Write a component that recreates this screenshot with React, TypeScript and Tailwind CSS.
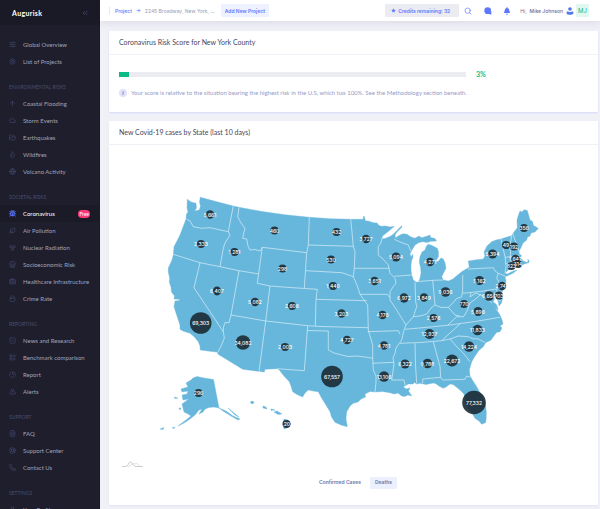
import { useState } from "react";
import {
  ArrowRight,
  ArrowUp,
  BriefcaseMedical,
  Bug,
  ChartPie,
  ChevronsLeft,
  Cloud,
  FileText,
  Flame,
  FolderOpen,
  Globe,
  LayoutList,
  Leaf,
  LifeBuoy,
  Lock,
  Phone,
  Radiation,
  Search,
  Settings,
  SlidersHorizontal,
  SquareCheck,
  Store,
  TriangleAlert,
  User,
} from "lucide-react";

const menu = [
  {
    title: "",
    items: [
      { label: "Global Overview", icon: SlidersHorizontal },
      { label: "List of Projects", icon: Settings },
    ],
  },
  {
    title: "Environmental risks",
    items: [
      { label: "Coastal Flooding", icon: ArrowUp },
      { label: "Storm Events", icon: Cloud },
      { label: "Earthquakes", icon: FolderOpen },
      { label: "Wildfires", icon: Flame },
      { label: "Volcano Activity", icon: Globe },
    ],
  },
  {
    title: "Societal risks",
    items: [
      { label: "Coronavirus", icon: Bug, active: true, badge: "Free" },
      { label: "Air Pollution", icon: Leaf },
      { label: "Nuclear Radiation", icon: Radiation },
      { label: "Socioeconomic Risk", icon: Store },
      { label: "Healthcare Infrastructure", icon: BriefcaseMedical },
      { label: "Crime Rate", icon: Lock },
    ],
  },
  {
    title: "Reporting",
    items: [
      { label: "News and Research", icon: SquareCheck },
      { label: "Benchmark comparison", icon: LayoutList },
      { label: "Report", icon: ChartPie },
      { label: "Alerts", icon: TriangleAlert },
    ],
  },
  {
    title: "Support",
    items: [
      { label: "FAQ", icon: FileText },
      { label: "Support Center", icon: LifeBuoy },
      { label: "Contact Us", icon: Phone },
    ],
  },
  {
    title: "Settings",
    items: [{ label: "Your Profile", icon: User }],
  },
];

// x, y, radius, cases
const bubbles: [number, number, number, string][] = [
  [210, 214.5, 4.5, "5,661"],
  [201, 244, 4.3, "2,333"],
  [234.5, 252, 4.3, "1,281"],
  [274.5, 230.5, 4.3, "460"],
  [282.5, 268.5, 4.3, "298"],
  [217, 291, 4.6, "6,407"],
  [255, 302, 4.5, "5,082"],
  [292, 306, 4.3, "2,606"],
  [336.5, 232, 4.3, "432"],
  [331, 259.5, 4.3, "530"],
  [333, 286, 4.3, "1,440"],
  [366, 239, 4.5, "3,727"],
  [374.5, 281, 4.5, "3,651"],
  [396, 257, 4.7, "5,094"],
  [430, 262, 4.5, "4,271"],
  [404, 298, 4.9, "6,972"],
  [424, 297.5, 4.5, "3,849"],
  [445.5, 292, 5, "9,036"],
  [341.5, 313.5, 4.4, "3,203"],
  [382.5, 315, 4.5, "4,176"],
  [347, 340, 4.5, "4,727"],
  [384, 345.5, 4.5, "4,781"],
  [384, 376.5, 5.4, "13,106"],
  [405, 364, 4.8, "6,322"],
  [427.5, 363.5, 5, "9,788"],
  [452, 360.5, 6.3, "22,672"],
  [469, 346.5, 5.4, "14,224"],
  [477.5, 330, 5.4, "11,833"],
  [429.5, 334, 5.3, "12,937"],
  [433.5, 318, 4.3, "2,576"],
  [464, 304, 4.3, "770"],
  [478, 311.5, 4.7, "5,896"],
  [479.5, 280.5, 4.8, "5,162"],
  [492.5, 254, 4.8, "5,394"],
  [506, 245, 4.3, "49"],
  [514, 246.5, 4.3, "192"],
  [524, 228, 4.3, "356"],
  [515.5, 259, 4.5, "1,642"],
  [518, 264, 4.3, "514"],
  [511.5, 266, 4.3, "823"],
  [502, 286, 4.5, "2,747"],
  [489, 296, 5, "6,650"],
  [499, 295.5, 4.3, "703"],
  [200.7, 323, 11, "69,303"],
  [243, 342.5, 7.5, "34,082"],
  [285, 347, 4.3, "2,003"],
  [332, 376.5, 11, "67,557"],
  [474, 402.5, 12, "77,332"],
  [198.5, 393, 4.3, "296"],
  [286.5, 424, 4.3, "1,207"],
];

const mainland =
  "M200.3 197.3L216 201.5L233.3 206L239 207.3L262 211.5L285 214.8L309.3 217.3L330 218.7L350.7 219.3L363.3 219.3V216.3L364.6 216.8L365.3 220.7L369 221.2L373.3 222.7L377 223L379 225.5L381.7 226.3L386 226L390 227L394.3 226.3L390 230L387.3 232.3L382.5 236L381.7 239L385 238.6L390 236.5L393 234.5L396 231.5L401.7 225.7L402 227L397 232L395 235L395.5 238L399 235.6L403 233.8L407 234.3L411 237L415 238.3L419 236L421.7 237.7L426 236.5L430 235L430.5 237.5L435 238.5L436.5 241L431 241.3L427 242.5L423 241.7L419 242.5L415 245L412.5 249L410 254L411 257L412.7 254L413 257L411.5 261L411 265L411 270L411.7 275L413.3 280L416.7 282.3L419 281L420 278.3L421 273L420.7 268.3L419.3 262L420 256.7L422 252L425 250L426.5 246L428.3 244.3L432 245.5L437.3 248.3L438.5 252L438.3 256.7L435.5 261.7L438 261.5L441 258L443.3 259L445 263L446 268.3L444 272L441.7 276.7L443.3 280L448.3 281L453 279L456.7 275.7L462 271.5L469.3 267.3L468.3 261L475 260L483.3 259L485 256L484 252L487 246L491.7 241.7L496 240L501 239L507 237L511.7 235.7L514 232L517.3 227.7L517 220L518.5 215L520 211L522 212L524 209.7L527.3 210.5L530 220L532.5 221.5L533.5 225.5L538.3 228.3L535 232L531 233L530 236L527.5 237L526.7 240L523 243L520.7 248.3L519 251L519.3 254.3L521.5 255.5L520.5 257.5L523.3 261L527 262.4L528.5 260.5L527.3 259.5L529 260L529 262.5L523 264.5L520.5 266.5L517 267L511.7 269L508 270L505 273.3L507.5 274L512 271.5L517 270L513 273.2L507 276L505 276.5L506 281L505 286.7L502 292L500 291L500.5 295L502.7 298L501.5 303L499 306L498.5 302L496 297L495 292L494 294L494.5 299L493 302L496 304L497.5 307L498 310L495 307L498 312L500 315L502 320L503 324L500 326L502 328L500 331.7L496.5 332.5L493.3 336.7L491 340L485.7 342.7L483 347L479.3 350L475 356L471.7 361.7L469.3 370L470 376L473 381L476.7 386.7L479.5 392L483.3 398.3L485.5 405L486.3 411.7L486.2 418L485.7 422.5L481.7 424.3L479 421L475 418.3L472 413L468.3 408.3L465.5 403L465 398L464 394L460 390L456.7 387.3L453 384.5L450 384L446 387L443.3 388.3L439 386L436 383.8L433.3 383L426 384.5L420 383.3L416.8 384L414.5 382.5L413 384L408.3 384L403.3 386.7L406 389L410 388L408.5 391L411.7 396L408 395L404.5 396.5L401.7 396L398 393L394 394L390 392.7L382.5 391.5L375 392L370 391.5L365 394L365.5 397L361 399L358 402L353.3 403.3L350 406L346.7 411.7L346 419L347.3 426.7L341 425L335 422.3L331.5 417L330 411.7L326 405L321.7 398.3L318.3 391.7L313 391L308.3 390L305 393L302.7 397L297 394.5L292.7 391.7L291 386L289.3 381.7L284 376L279.3 370L277.3 368.7L265 369.3L264.3 372L242.7 369.3L217.7 354L218 352.3L200.3 350L200 346L198.3 341.7L194 336.5L190 333.3L183 331L180 329.3L180 325L177 316L174 306.7L175 301L179.500 300.500L179.500 299.300L174 299L174.5 296L171.5 292L171 287L169.3 282L169.7 278L168.3 272L168.3 268L172 260L173.3 255L174 246.7L177 241L180 235L183 227L186 219.3L186.5 214L188 212L187 208L187.3 199.3L191 202L196 203.3L196.5 208L194.5 211L199.3 210L200.5 206L199.5 202Z";

const borders =
  "M186.7 219.3L190 221L193.3 226.7L201.7 228.3L210 227.7L228.3 231.7" +
  "M233.3 206L228.3 231.7L230 235L225 243L224 246L223 250L220 266.7" +
  "M173.3 254.3L200 262.7L220 266.7L239 270.7L259 274" +
  "M239 207.3L237.7 216.7L241 223L245 228.3L243.5 234L242.7 238.3L246.7 239L248 246L250 250L255 249.5L260 251L262.3 247.3L306.7 252.7" +
  "M262.3 247.3L257.3 283.3L270 286L290 287.5L317.3 289.3L316 299.3L366.7 300.7" +
  "M309.3 217.3L308.3 245L306.7 252.7L304.3 288.3M308.3 245L353.3 246.3M306 270.7L341.7 272.7L347 274.5L353.3 276.7" +
  "M200 262.7L194 287.7L223.3 331.7L224.3 338L222 344L220 348L218 352" +
  "M239 270.7L231 315L229 322.7L225 322.5L223.5 327L223.3 331.7" +
  "M231 315L265.7 321L307.7 325.7L320 326.5L368.3 327.7M270 286L265.7 321L259 371.7" +
  "M316 299.3L315.3 326M307.7 325.7L304.3 370.7L277.3 368.7M307 330.5L328.3 331L328.3 350L334 353L341.7 355L348 356.5L356.7 356L365 357L372.7 358.3L373.3 370L376 376L376 382L375 392" +
  "M350.7 219.3L352 232L353.3 246.3L355 251.7L354.3 268.3L353.3 276.7L357 285L360 294.3L363.3 299L367.7 305L368.3 330L372.7 345V358.3" +
  "M354.3 268.3L389.3 268.3M360 294.3L387.3 294.3L390 297.7M372.7 363.3L394 362.3" +
  "M381.7 239L381 243L378.3 246.7V255L383 259L388.3 265L390 273.3L395 278.3L396 283L393 287L390 291.7V300L396.7 310L401.7 318.3L406 325L404 330L401.7 340L396 348L395 353.3L393 358L394 364L391.7 380L404 380L405 385" +
  "M367.7 331.7L398.3 330.7L400 334.3" +
  "M394.3 276.3L411.7 275M394.3 239.3L400 242L408.3 245L411 251.7M415 281.7L415.7 301.7L416.7 306.7L413.3 316.7" +
  "M416.7 281.7L432.7 280.3L443.3 280M432.7 280.3L435 305" +
  "M406 325L413.3 316.7L420 316L426.7 314L431 308L435 305L441 307.5L448.3 307.3L452 304L456 299L461.7 296.7L462.7 290V275" +
  "M448.3 307.3L455 315L463.3 317L467 311L470 303L477 298L481 294M448 325L456.7 316.7L460 317" +
  "M405 329.3L430 327L450 325L475 321.5L500 317.3M400 343.3L420 342.5L441.7 340.7L450 339L458.3 336L468.3 336.7L473.3 339L477 338.5L485.7 342.7" +
  "M441.7 340.7L450 333L460 324M450 339L456 346L464 354L470 361.7" +
  "M462.7 293.3L480 291.5L496.7 289L498 300L501 301M468 269L493.3 267.7L495 271L498.3 273.3L496.7 278L500 284L497 289M498.3 273.3L505 276M471 293L470 297L476 293L485 297L492 303" +
  "M501 239L503 248L505 256.7L506 266.7L505 273.3M511.7 235.7L510 245L510.7 256.7M512.7 233.3L516 243L519.3 251.7M505 257.3L519.3 255.7M505.7 263.3L518.3 262.3M514 263L514.5 268" +
  "M415 343.3L415.5 365L416.7 383.3M433.3 341.7L440 366.7L440.7 377.3L422.7 379V383.3M440.7 377.3L442.7 380L465 379.3L466.7 376L470 377";

const alaska =
  "M186 383L191 380L193 378L197 376.5L204 378L213.5 379.5L219 408L214 407L209 407.5L205 409L203 412L199 414L202 409L199 410L195 415L190 419L184 423L178 426L186 420L191 416L188 414L184 412L183 408L182 404L186 401L189 399L183 400L182 395L187 394L188 391L182 392L181 389L188 387Z" +
  "M219 408L226 411L233 416L240 419L238 420L231 416L223 411ZM228 408L234 413L239 417L235 415ZM203 407L207 407L203 411ZM174 397L178 398L175 398.5ZM179 408L181 408L180 410ZM172 428L175 427L174 428.5ZM160 429L164 427.5L163 429.5Z";

const hawaii =
  "M250 402L253 401L254 403L252 404ZM263 406L266 407L267 409L263 408ZM271 409L275 410L271 410.5ZM274 412L277 411L282 414L278 414.5ZM284 419L288 420L291 424L287 428L284 429L283 423Z";

function Sidebar() {
  return (
    <aside className="sticky top-0 h-screen w-[100px] shrink-0 overflow-hidden border-r border-[#191927] bg-[#1e1e2d] text-[6px] leading-[8px] text-[#a2a3b7]">
      <div className="flex h-[25px] items-center justify-between bg-[#1a1a27] pr-[10px] pl-3">
        <span className="text-[7px] font-bold tracking-wider text-white">Augurisk</span>
        <button aria-label="Collapse menu" className="text-[#4b4d7c]">
          <ChevronsLeft size={8} strokeWidth={2} />
        </button>
      </div>
      <nav className="pt-[11px]">
        {menu.map((group) => (
          <div key={group.title}>
            {group.title && (
              <h4 className="flex h-[25px] items-end pb-1 pl-[9px] text-[5px] text-[#4c4e6f] uppercase">
                {group.title}
              </h4>
            )}
            {group.items.map((item: any) => (
              <a
                key={item.label}
                href="#"
                className={
                  item.active
                    ? "flex h-[17px] items-center gap-[7px] bg-[#1b1b28] pr-[9px] pl-[9px] text-white"
                    : "flex h-[17px] items-center gap-[7px] pl-[9px] whitespace-nowrap"
                }
              >
                <item.icon
                  size={7}
                  strokeWidth={item.active ? 3 : 2}
                  className={item.active ? "shrink-0 text-[#5d78ff]" : "shrink-0 text-[#494b74]"}
                />
                <span>{item.label}</span>
                {item.badge && (
                  <span className="ml-auto rounded-full bg-[#fd397a] px-px text-[5px] text-white">
                    {item.badge}
                  </span>
                )}
              </a>
            ))}
          </div>
        ))}
      </nav>
    </aside>
  );
}

function Topbar() {
  return (
    <header className="flex h-[21px] items-center justify-between bg-white pr-[11px] pl-[9px] font-['Inter',sans-serif] text-[5px] leading-[8px] whitespace-nowrap shadow-[0_1px_8px_rgba(82,63,105,0.15)]">
      <div className="flex items-center">
        <div className="flex items-center gap-1 border-l border-[#e7e8f1] pl-[5px]">
          <a href="#" className="font-medium text-[#5d78ff]">Project</a>
          <ArrowRight size={5} strokeWidth={3} className="text-[#5d78ff]" />
          <span className="text-[#959cb6]">2245 Broadway, New York, ...</span>
        </div>
        <button className="ml-[6px] h-[13px] rounded-[1px] bg-[#eef1ff] px-1 font-semibold text-[#5d78ff]">
          Add New Project
        </button>
      </div>
      <div className="flex items-center">
        <button className="flex h-[13px] items-center gap-[2px] rounded-[1px] bg-[#ebecf1] pr-[9px] pl-[6px] font-semibold text-[#5d78ff]">
          <svg viewBox="0 0 24 24" className="size-[5px]" fill="currentColor">
            <path d="M12 1l3 7 8 1-6 5 2 8-7-4-7 4 2-8-6-5 8-1z" />
          </svg>
          Credits remaining: 32
        </button>
        <button aria-label="Search" className="ml-[5px] text-[#5d78ff]">
          <Search size={8} strokeWidth={2} />
        </button>
        <button aria-label="Messages" className="ml-3 text-[#5d78ff]">
          <svg viewBox="0 0 24 24" className="size-[8px]" fill="currentColor">
            <circle cx="11" cy="11" r="10" />
            <path d="M13 20l9 3V12z" />
          </svg>
        </button>
        <button aria-label="Notifications" className="ml-[11px] text-[#5d78ff]">
          <svg viewBox="0 0 24 24" className="size-[8px]" fill="currentColor">
            <path d="M12 1c-2 0-2 2-2 3-4 1-5 4-5 8l-3 6h20l-3-6c0-4-1-7-5-8 0-1 0-3-2-3zM9 20h6c0 4-6 4-6 0z" />
          </svg>
        </button>
        <span className="ml-[9px] text-[#6c7293]">Hi,</span>
        <span className="ml-[3px] font-medium text-[#646c9a]">Mike Johnson</span>
        <svg viewBox="0 0 24 24" className="ml-[3px] size-[8px] text-[#5078e8]" fill="currentColor">
          <circle cx="12" cy="6" r="5.5" />
          <path d="M2 15c3-3 6-1 10 1 4-2 7-4 10-1v5c-4 4-16 4-20 0z" />
        </svg>
        <span className="ml-[2px] flex h-[13px] w-[13px] items-center justify-center rounded-[1px] bg-[#e1f7f1] text-[6px] text-[#0abb87]">
          MJ
        </span>
      </div>
    </header>
  );
}

function CasesMap() {
  return (
    <svg viewBox="109 145 489 326" className="block w-full" role="img" aria-label="Cases by state">
      <g fill="#67b7dc" stroke="#67b7dc" strokeWidth="0.4" strokeLinejoin="round">
        <path d={mainland} />
        <path d={alaska} />
        <path d={hawaii} />
      </g>
      <path d={borders} fill="none" stroke="#d9eef7" strokeWidth="0.7" strokeLinejoin="round" />
      {bubbles.map(([x, y, r, label]) => (
        <g key={`${x}-${y}`}>
          <circle cx={x} cy={y} r={r - 0.2} fill="#1b2b34" fillOpacity="0.9" />
          <text
            x={x}
            y={y + 2}
            textAnchor="middle"
            fill="#fff"
            className="font-['Inter',sans-serif] text-[5px] font-medium"
          >
            {label}
          </text>
        </g>
      ))}
      <g fill="none" strokeWidth="0.6">
        <path d="M122 466.5h3.5c3 0 3-4.5 5-4.5s2 4.5 6 4.5h6" stroke="#a5a5a5" />
        <path d="M128 466.5c3 0 3.5-3 5-3s1.500 1 3 0 3 3 5 3h2" stroke="#cfcfcf" />
      </g>
    </svg>
  );
}

export default function App() {
  const [metric, setMetric] = useState("Deaths");

  return (
    <div className="flex min-h-screen bg-[#f0f1f7] font-['Lato',sans-serif]">
      <Sidebar />

      <div className="min-w-0 flex-1">
        <Topbar />

        <main className="flex flex-col gap-[9px] pt-[10px] pr-[2px] pb-[3px] pl-[9px]">
          {/* Risk score */}
          <section className="rounded-[1px] bg-white shadow-[0_1px_2px_rgba(93,120,255,0.2)]">
            <h2 className="flex h-6 items-center border-b border-[#f0f1f7] px-[10px] text-[7px] text-[#48465b]">
              Coronavirus Risk Score for New York County
            </h2>
            <div className="px-[10px] pt-[15px] pb-[15px]">
              <div className="flex items-center gap-[10px]">
                <div className="h-[5px] w-[74%] bg-[#ebecf1]">
                  <div className="h-full w-[3%] bg-[#0abb87]" />
                </div>
                <span className="text-[7px] leading-[9px] font-bold text-[#0abb87]">3%</span>
              </div>
              <p className="mt-[10px] flex items-center gap-1 text-[6px] leading-[8px] text-[#959cc5]">
                <span className="flex size-[8px] shrink-0 items-center justify-center rounded-full bg-[#dfe3fb] font-bold text-[#6574c4] italic">
                  i
                </span>
                Your score is relative to the situation bearing the highest risk in the U.S, which has
                100%. See the Methodology section beneath.
              </p>
            </div>
          </section>

          {/* Map */}
          <section className="rounded-[1px] bg-white shadow-[0_1px_2px_rgba(93,120,255,0.1)]">
            <h2 className="flex h-6 items-center border-b border-[#f0f1f7] px-[10px] text-[7px] text-[#48465b]">
              New Covid-19 cases by State (last 10 days)
            </h2>
            <CasesMap />
            <div className="flex justify-center gap-1 pt-[6px] pb-[16px] pl-1 font-['Inter',sans-serif] text-[5px]">
              {["Confirmed Cases", "Deaths"].map((name) => (
                <button
                  key={name}
                  onClick={() => setMetric(name)}
                  className={
                    metric === name
                      ? "h-3 rounded-[1px] bg-[#eceffd] px-[5px] font-semibold text-[#6c76a8]"
                      : "h-3 rounded-[1px] px-[5px] font-semibold text-[#6c76a8]"
                  }
                >
                  {name}
                </button>
              ))}
            </div>
          </section>
        </main>
      </div>
    </div>
  );
}
